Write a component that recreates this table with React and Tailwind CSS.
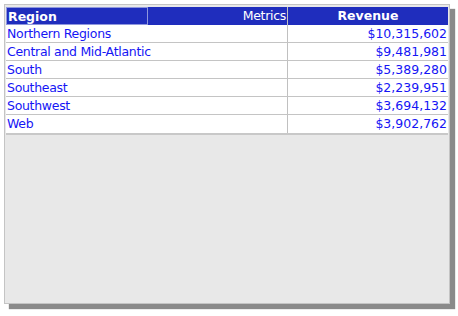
const rows = [
  ['Northern Regions', '$10,315,602'],
  ['Central and Mid-Atlantic', '$9,481,981'],
  ['South', '$5,389,280'],
  ['Southeast', '$2,239,951'],
  ['Southwest', '$3,694,132'],
  ['Web', '$3,902,762'],
];

export default function App() {
  return (
    <div className="h-[316px] w-[458px] bg-white pl-[4px] pt-[4px] font-['DejaVu_Sans',sans-serif]">
      <div className="h-[300px] w-[446px] border border-[#c4c4c4] bg-[#e8e8e8] px-px pt-[2px] shadow-[5px_5px_1px_#8a8a8a]">
        <div className="border-b-2 border-[#c8c8c8] bg-white">
          <div className="flex h-[18px] bg-[#1f2dbd] text-[12.5px] leading-[17px] text-white">
            <div className="flex w-[282px] border-r border-[#c0c0c0]">
              <div className="w-[142px] border border-[#8f97dd] pl-[1px] font-bold">Region</div>
              <div className="flex-1 pr-[1px] text-right tracking-[-0.3px]">Metrics</div>
            </div>
            <div className="flex-1 text-center font-bold">Revenue</div>
          </div>
          {rows.map(([name, value]) => (
            <div key={name} className="flex h-[18px] border-b border-[#c4c4c4] text-[12.5px] leading-[18px] text-[#1515f5] last:border-b-0">
              <div className="w-[282px] border-r border-[#c0c0c0] pl-[1px] tracking-[-0.3px]">{name}</div>
              <div className="flex-1 pr-[1px] text-right">{value}</div>
            </div>
          ))}
        </div>
      </div>
    </div>
  );
}
